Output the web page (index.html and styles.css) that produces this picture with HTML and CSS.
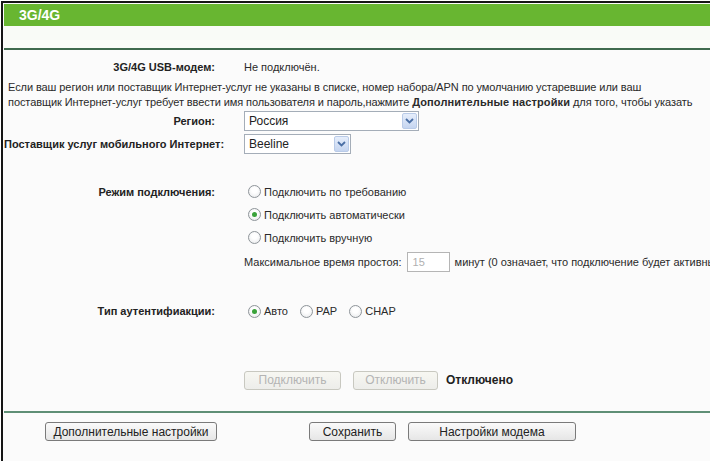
FILE: index.html
```html
<!DOCTYPE html>
<html lang="ru">
<head>
<meta charset="utf-8">
<title>3G/4G</title>
<link rel="stylesheet" href="styles.css">
</head>
<body>
<div class="frame">
  <div class="title">3G/4G</div>
  <div class="subbar"></div>
  <div class="content">
    <div class="row r-usb">
      <div class="lbl">3G/4G USB-модем:</div>
      <div class="val">Не подключён.</div>
    </div>
    <p class="note">Если ваш регион или поставщик Интернет-услуг не указаны в списке, номер набора/APN по умолчанию устаревшие или ваш<br>поставщик Интернет-услуг требует ввести имя пользователя и пароль,нажмите <b>Дополнительные настройки</b> для того, чтобы указать</p>
    <div class="row r-region">
      <div class="lbl">Регион:</div>
      <div class="val"><div class="select sel-wide"><span class="sel-text">Россия</span><span class="sel-btn"><svg width="9" height="6" viewBox="0 0 9 6"><path d="M1 1 L4.5 4.5 L8 1" fill="none" stroke="#4a6fa5" stroke-width="1.8"/></svg></span></div></div>
    </div>
    <div class="row r-isp">
      <div class="lbl">Поставщик услуг мобильного Интернет:</div>
      <div class="val"><div class="select sel-narrow"><span class="sel-text">Beeline</span><span class="sel-btn"><svg width="9" height="6" viewBox="0 0 9 6"><path d="M1 1 L4.5 4.5 L8 1" fill="none" stroke="#4a6fa5" stroke-width="1.8"/></svg></span></div></div>
    </div>
    <div class="row r-mode">
      <div class="lbl">Режим подключения:</div>
      <div class="val"><span class="radio"></span>Подключить по требованию</div>
    </div>
    <div class="row r-opt">
      <div class="lbl"></div>
      <div class="val"><span class="radio on"></span>Подключить автоматически</div>
    </div>
    <div class="row r-opt">
      <div class="lbl"></div>
      <div class="val"><span class="radio"></span>Подключить вручную</div>
    </div>
    <div class="row r-idle">
      <div class="lbl"></div>
      <div class="val">Максимальное время простоя:<span class="num">15</span>минут (0 означает, что подключение будет активны</div>
    </div>
    <div class="row r-auth">
      <div class="lbl">Тип аутентифиакции:</div>
      <div class="val">
        <span class="opt"><span class="radio on"></span>Авто</span>
        <span class="opt"><span class="radio"></span>PAP</span>
        <span class="opt"><span class="radio"></span>CHAP</span>
      </div>
    </div>
    <div class="row r-conn">
      <div class="lbl"></div>
      <div class="val">
        <span class="btn dis b-conn">Подключить</span>
        <span class="btn dis b-disc">Отключить</span>
        <b class="state">Отключено</b>
      </div>
    </div>
  </div>
  <div class="sep"></div>
  <div class="actions">
    <span class="btn b-adv">Дополнительные настройки</span>
    <span class="btn b-save">Сохранить</span>
    <span class="btn b-modem">Настройки модема</span>
  </div>
</div>
</body>
</html>
```

FILE: styles.css
```css
html, body {
  margin: 0;
  padding: 0;
  background: #ffffff;
}
body {
  font-family: "Liberation Sans", Arial, sans-serif;
  font-size: 11px;
  color: #2a2a2a;
  width: 710px;
  height: 461px;
  overflow: hidden;
}
.frame {
  margin: 1px 0 0 1px;
  border-top: 2px solid #151515;
  border-left: 2px solid #151515;
  padding: 1px 0 0 1px;
  height: 457px;
  background: #fbfbfb;
  overflow: hidden;
}
.title {
  height: 22px;
  line-height: 22px;
  background: #68b631;
  color: #ffffff;
  font-weight: bold;
  font-size: 14px;
  padding-left: 15px;
}
.subbar {
  height: 22px;
  background: #f9fbf7;
  border-bottom: 2px solid #3f6a4d;
}
.content {
  padding-top: 7px;
}
.row {
  display: grid;
  grid-template-columns: 211px 1fr;
  column-gap: 29px;
  align-items: center;
  white-space: nowrap;
}
.lbl {
  text-align: right;
  font-weight: bold;
  color: #222;
}
.val {
  display: flex;
  align-items: center;
  min-width: 0;
}
.r-usb { height: 20px; }
.note {
  margin: 3px 0 0 0;
  padding-left: 4px;
  line-height: 15px;
  white-space: nowrap;
  letter-spacing: -0.08px;
}
.note b { letter-spacing: 0.1px; }
.r-region { height: 21px; margin-top: 0; }
.r-isp { height: 22px; margin-top: 2px; }
.r-mode { height: 23px; margin-top: 25px; }
.r-opt { height: 23px; }
.r-idle { height: 22px; margin-top: 2px; }
.r-auth { height: 22px; margin-top: 27px; }
.r-conn { height: 20px; margin-top: 48px; }

.select {
  position: relative;
  height: 18px;
  border: 1px solid #a4adb8;
  background: #ffffff;
  display: flex;
  align-items: center;
  box-sizing: content-box;
}
.sel-wide { width: 173px; }
.sel-narrow { width: 105px; }
.sel-text {
  padding-left: 4px;
  font-size: 12px;
  color: #222;
  flex: 1;
}
.sel-btn {
  width: 15px;
  height: 16px;
  margin-right: 1px;
  border: 1px solid #b9cbe8;
  border-radius: 2px;
  background: linear-gradient(#e6eefb, #c5d5f0);
  display: flex;
  align-items: center;
  justify-content: center;
  box-sizing: border-box;
}

.radio {
  display: inline-block;
  width: 11px;
  height: 11px;
  border: 1px solid #8e9499;
  border-radius: 50%;
  background: radial-gradient(circle at 50% 40%, #ffffff 30%, #e4e6e8 100%);
  margin: 0 3px 0 4px;
  position: relative;
  flex: none;
}
.radio.on::after {
  content: "";
  position: absolute;
  left: 3px;
  top: 3px;
  width: 5px;
  height: 5px;
  border-radius: 50%;
  background: #3aa23a;
}
.opt {
  display: inline-flex;
  align-items: center;
  margin-right: 8px;
}

.num {
  display: inline-block;
  width: 36px;
  height: 18px;
  line-height: 18px;
  border: 1px solid #b5b5b5;
  background: #fff;
  color: #b0b0b0;
  padding-left: 5px;
  margin: 0 5px 0 5px;
  flex: none;
}

.btn {
  display: inline-flex;
  align-items: center;
  justify-content: center;
  height: 17px;
  border: 1px solid #7a7a7a;
  border-radius: 3px;
  background: linear-gradient(#fafafa, #e6e6e6);
  color: #222;
  font-size: 12px;
  box-sizing: content-box;
  white-space: nowrap;
  flex: none;
}
.btn.dis {
  border-color: #c8c8c0;
  color: #b4b4b4;
  background: linear-gradient(#f7f7f2, #ededea);
}
.b-conn { width: 95px; }
.b-disc { width: 83px; margin-left: 12px; }
.state {
  margin-left: 8px;
  font-weight: bold;
  font-size: 12px;
  color: #222;
}

.sep {
  margin-top: 21px;
  height: 0;
  border-top: 2px solid #5f8f76;
}
.actions {
  display: flex;
  padding: 9px 0 0 41px;
}
.b-adv { width: 170px; }
.b-save { width: 85px; margin-left: 92px; }
.b-modem { width: 166px; margin-left: 12px; }
```
